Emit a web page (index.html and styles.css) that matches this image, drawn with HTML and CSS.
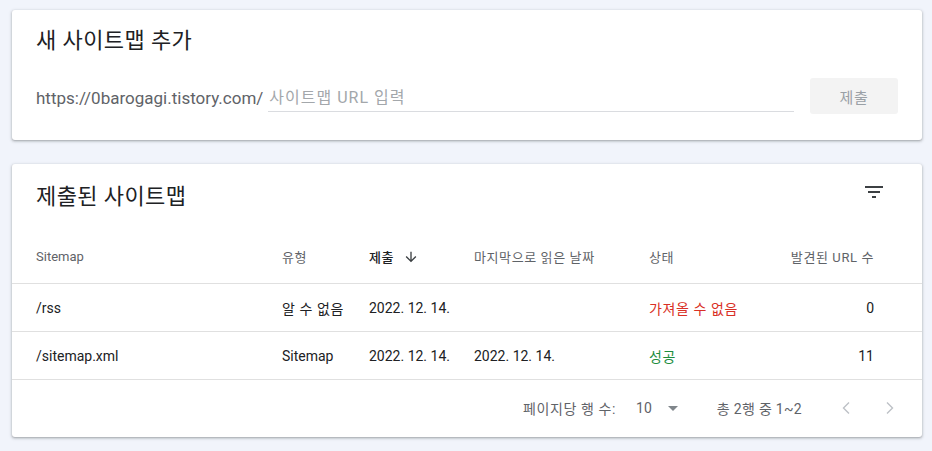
FILE: index.html
```html
<!DOCTYPE html>
<html lang="ko">
<head>
  <meta charset="UTF-8">
  <meta name="viewport" content="width=device-width, initial-scale=1.0">
  <title>Sitemaps</title>
  <link rel="stylesheet" href="styles.css">
</head>
<body>
  <div class="card add-card">
    <p class="card-title ko">새 사이트맵 추가</p>
    <div class="add-row">
      <span class="url-prefix">https://0barogagi.tistory.com/</span>
      <div class="url-field"><span class="placeholder">사이트맵 URL 입력</span></div>
      <button class="submit-button">제출</button>
    </div>
  </div>

  <div class="card list-card">
    <div class="list-head">
      <p class="card-title ko">제출된 사이트맵</p>
      <button class="icon-button filter-button">
        <svg width="24" height="24" viewBox="0 0 24 24"><path d="M10 18h4v-2h-4v2zM3 6v2h18V6H3zm3 7h12v-2H6v2z" fill="#3c4043"/></svg>
      </button>
    </div>

    <table class="sitemap-table">
      <colgroup>
        <col style="width: 270px">
        <col style="width: 87px">
        <col style="width: 105px">
        <col style="width: 175px">
        <col style="width: 111px">
        <col style="width: 162px">
      </colgroup>
      <thead>
        <tr>
          <th>Sitemap</th>
          <th class="ko">유형</th>
          <th class="sorted ko">제출
            <svg class="sort-arrow" width="16" height="16" viewBox="0 0 24 24"><path d="M20 12l-1.41-1.41L13 16.17V4h-2v12.17l-5.58-5.59L4 12l8 8 8-8z" fill="#3c4043"/></svg>
          </th>
          <th class="ko">마지막으로 읽은 날짜</th>
          <th class="ko">상태</th>
          <th class="num ko">발견된 URL 수</th>
        </tr>
      </thead>
      <tbody>
        <tr>
          <td>/rss</td>
          <td class="ko">알 수 없음</td>
          <td>2022. 12. 14.</td>
          <td></td>
          <td class="status-error ko">가져올 수 없음</td>
          <td class="num">0</td>
        </tr>
        <tr>
          <td>/sitemap.xml</td>
          <td>Sitemap</td>
          <td>2022. 12. 14.</td>
          <td>2022. 12. 14.</td>
          <td class="status-ok ko">성공</td>
          <td class="num">11</td>
        </tr>
      </tbody>
    </table>

    <div class="pager">
      <span class="pager-label ko">페이지당 행 수:</span>
      <span class="pager-size">10</span>
      <svg class="pager-drop" width="24" height="24" viewBox="0 0 24 24"><path d="M7 10l5 5 5-5z" fill="#80868b"/></svg>
      <span class="pager-range">총 2행 중 1~2</span>
      <button class="icon-button pager-nav" disabled>
        <svg width="24" height="24" viewBox="0 0 24 24"><path d="M15 6.5l-5.5 5.5 5.5 5.5" fill="none" stroke="#bdc1c6" stroke-width="1.4"/></svg>
      </button>
      <button class="icon-button pager-nav" disabled>
        <svg width="24" height="24" viewBox="0 0 24 24"><path d="M9 6.5l5.5 5.5-5.5 5.5" fill="none" stroke="#bdc1c6" stroke-width="1.4"/></svg>
      </button>
    </div>
  </div>
</body>
</html>
```

FILE: styles.css
```css
body {
  margin: 0;
  padding: 10px 10px 14px 12px;
  background: #f1f4fb;
  font-family: "Roboto", "Noto Sans CJK KR", sans-serif;
  color: #202124;
}

/* hangul runs a bit wider in the original */
.ko {
  letter-spacing: 0.6px;
}

.card {
  width: 910px;
  background: #fff;
  border-radius: 3px;
  box-shadow: 0 1px 2px rgba(60, 64, 67, 0.3), 0 1px 3px 1px rgba(60, 64, 67, 0.15);
}

.card-title {
  margin: 0;
  font-size: 22px;
  line-height: 32px;
  font-weight: 400;
  color: #202124;
}

.card-title.ko {
  letter-spacing: 0.4px;
}

/* add sitemap */

.add-card {
  padding: 15px 24px 26px 24px;
  box-sizing: border-box;
  height: 130px;
}

.add-row {
  display: flex;
  align-items: flex-end;
  margin-top: 21px;
}

.url-prefix {
  font-size: 17px;
  line-height: 24px;
  color: #5f6368;
  margin-bottom: 4px;
  white-space: nowrap;
}

.url-field {
  flex: 1;
  margin-left: 5px;
  margin-bottom: 2px;
  border-bottom: 1px solid #dadce0;
  padding: 0 1px;
}

.placeholder {
  font-size: 16px;
  line-height: 26px;
  letter-spacing: 1px;
  color: #a3a7ab;
}

.submit-button {
  width: 88px;
  height: 36px;
  margin-left: 16px;
  border: none;
  border-radius: 3px;
  background: #f3f3f3;
  color: #9aa0a6;
  font-family: inherit;
  font-size: 15px;
  letter-spacing: 0.6px;
}

/* submitted list */

.list-card {
  margin-top: 24px;
  height: 273px;
}

.list-head {
  display: flex;
  justify-content: space-between;
  align-items: center;
  height: 65px;
  padding: 0 36px 0 24px;
}

.icon-button {
  width: 24px;
  height: 24px;
  padding: 0;
  border: none;
  background: none;
}

.filter-button {
  margin-bottom: 9px;
}

.sitemap-table {
  width: 910px;
  table-layout: fixed;
  border-collapse: collapse;
}

.sitemap-table th,
.sitemap-table td {
  padding: 0;
  text-align: left;
  white-space: nowrap;
  border-bottom: 1px solid #e0e0e0;
}

.sitemap-table th {
  height: 54px;
  font-size: 13px;
  font-weight: 400;
  color: #5f6368;
}

.sitemap-table td {
  height: 47px;
  font-size: 14px;
  color: #202124;
}

.sitemap-table th:first-child,
.sitemap-table td:first-child {
  padding-left: 24px;
}

.sitemap-table .num {
  text-align: right;
  padding-right: 48px;
}

.sitemap-table .sorted {
  color: #202124;
  font-weight: 500;
}

.sort-arrow {
  vertical-align: -3px;
  margin-left: 5px;
}

.sitemap-table .status-error {
  color: #d93025;
}

.sitemap-table .status-ok {
  color: #1e8e3e;
}

.pager {
  display: flex;
  justify-content: flex-end;
  align-items: center;
  height: 56px;
  padding-right: 20px;
}

.pager-label {
  font-size: 14px;
  color: #5f6368;
}

.pager-size {
  margin-left: 20px;
  font-size: 14px;
  color: #5f6368;
}

.pager-drop {
  margin-left: 9px;
}

.pager-range {
  margin-left: 32px;
  font-size: 14px;
  letter-spacing: 0.3px;
  color: #5f6368;
}

.pager-nav {
  margin-left: 20px;
}

.pager-range + .pager-nav {
  margin-left: 32px;
}
```
